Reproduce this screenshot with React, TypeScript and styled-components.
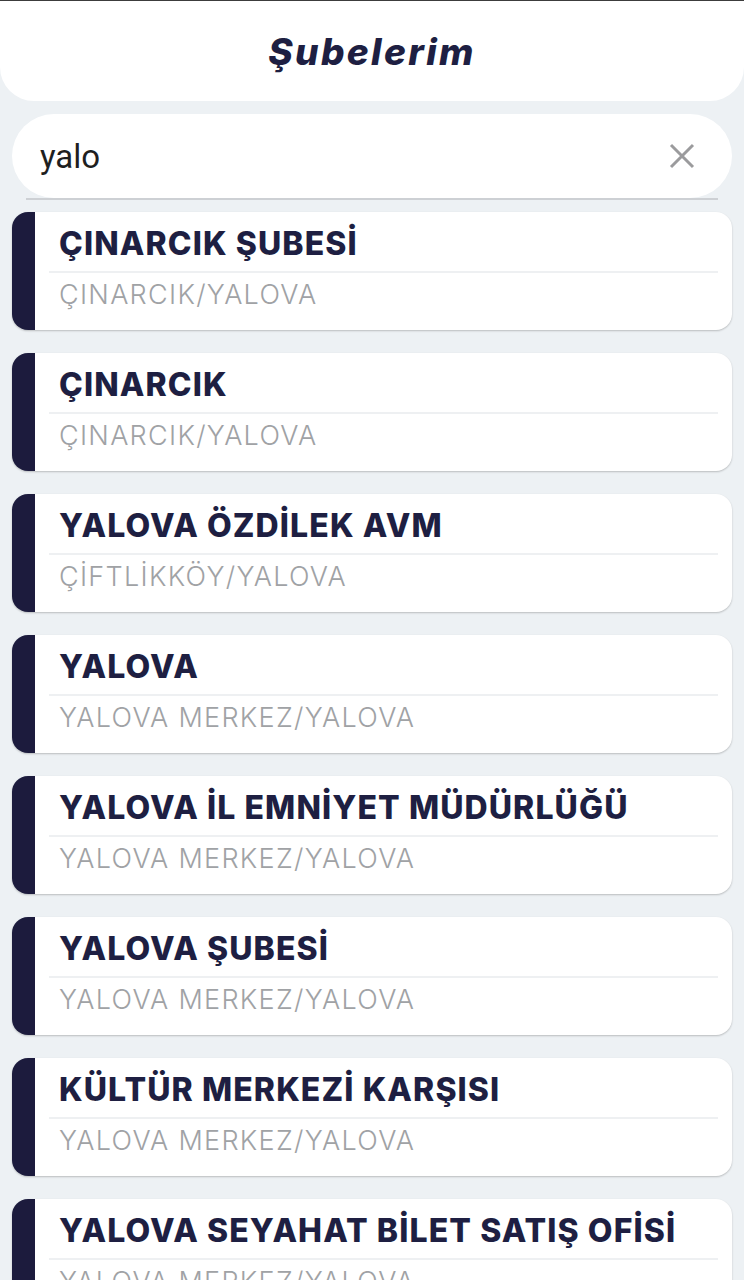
import React from "react";
import styled, { createGlobalStyle } from "styled-components";

const Global = createGlobalStyle`
  html, body { margin: 0; padding: 0; background: #edf1f4; }
  * { box-sizing: border-box; }
`;

const Page = styled.div`
  width: 744px;
  min-height: 1280px;
  background: #edf1f4;
  border-top: 1px solid #3c3c3c;
  display: flex;
  flex-direction: column;
  overflow: hidden;
  font-family: Inter, "Noto Sans", sans-serif;
`;

const Header = styled.header`
  height: 100px;
  background: #ffffff;
  border-radius: 0 0 34px 34px;
  display: flex;
  align-items: center;
  justify-content: center;
`;

const Title = styled.h1`
  margin: 0;
  font-family: Inter, sans-serif;
  font-style: italic;
  font-weight: 800;
  font-size: 37px;
  letter-spacing: 2.3px;
  color: #1e1f42;
`;

const SearchWrap = styled.div`
  margin: 13px 12px 0;
  display: flex;
  flex-direction: column;
  align-items: center;
`;

const SearchBox = styled.div`
  width: 100%;
  height: 84px;
  background: #ffffff;
  border-radius: 42px;
  display: flex;
  align-items: center;
  padding: 0 36px 0 28px;
`;

const SearchText = styled.div`
  flex: 1;
  font-family: Roboto, sans-serif;
  font-size: 33px;
  color: #1f1f1f;
`;

const Underline = styled.div`
  width: 692px;
  height: 2px;
  background: #cdd0d4;
`;

const List = styled.div`
  display: flex;
  flex-direction: column;
  gap: 23px;
  padding: 12px 12px 0;
`;

const Card = styled.div`
  height: 118px;
  background: #ffffff;
  border-left: 23px solid #1c1b3d;
  border-radius: 16px;
  box-shadow: 0 1px 2px rgba(0, 0, 0, 0.22);
  padding: 0 14px 0 14px;
  display: flex;
  flex-direction: column;
  flex-shrink: 0;
`;

const Name = styled.div`
  height: 61px;
  padding: 12px 0 0 10px;
  border-bottom: 2px solid #eef0f2;
  font-family: Inter, sans-serif;
  font-weight: 800;
  font-size: 32px;
  line-height: 40px;
  letter-spacing: 1.1px;
  color: #1e1f42;
  white-space: nowrap;
`;

const Place = styled.div`
  padding: 4px 0 0 10px;
  font-family: Inter, sans-serif;
  font-weight: 300;
  font-size: 27px;
  line-height: 36px;
  letter-spacing: 1.3px;
  color: #a0a2a5;
  white-space: nowrap;
`;

const items: [string, string][] = [
  ["ÇINARCIK ŞUBESİ", "ÇINARCIK/YALOVA"],
  ["ÇINARCIK", "ÇINARCIK/YALOVA"],
  ["YALOVA ÖZDİLEK AVM", "ÇİFTLİKKÖY/YALOVA"],
  ["YALOVA", "YALOVA MERKEZ/YALOVA"],
  ["YALOVA İL EMNİYET MÜDÜRLÜĞÜ", "YALOVA MERKEZ/YALOVA"],
  ["YALOVA ŞUBESİ", "YALOVA MERKEZ/YALOVA"],
  ["KÜLTÜR MERKEZİ KARŞISI", "YALOVA MERKEZ/YALOVA"],
  ["YALOVA SEYAHAT BİLET SATIŞ OFİSİ", "YALOVA MERKEZ/YALOVA"],
];

export default function App() {
  return (
    <Page>
      <Global />
      <Header>
        <Title>Şubelerim</Title>
      </Header>
      <SearchWrap>
        <SearchBox>
          <SearchText>yalo</SearchText>
          <svg width="28" height="28" viewBox="0 0 28 28">
            <path d="M3 3 L25 25 M25 3 L3 25" stroke="#9b9b9d" strokeWidth="3" strokeLinecap="butt" />
          </svg>
        </SearchBox>
        <Underline />
      </SearchWrap>
      <List>
        {items.map(([n, p], i) => (
          <Card key={i}>
            <Name>{n}</Name>
            <Place>{p}</Place>
          </Card>
        ))}
      </List>
    </Page>
  );
}
